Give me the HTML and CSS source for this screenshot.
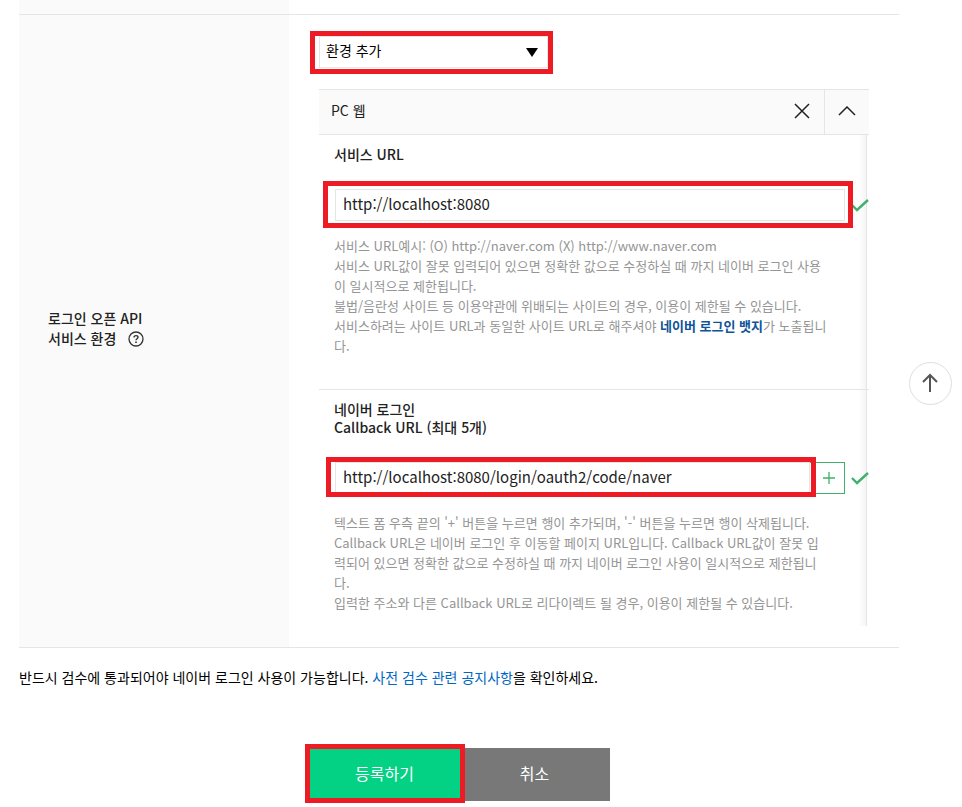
FILE: index.html
```html
<!DOCTYPE html>
<html lang="ko">
<head>
<meta charset="utf-8">
<meta name="viewport" content="width=device-width, initial-scale=1">
<title>애플리케이션 등록</title>
<link rel="stylesheet" href="styles.css">
</head>
<body>
<main class="page">
  <form class="register">
    <div class="row row-previous"><div class="row-head"></div></div>
    <section class="row">
      <div class="row-head">
        <h2 class="row-title">로그인 오픈 API<br>서비스 환경
          <button class="help" type="button" aria-label="도움말"><svg viewBox="0 0 16 16" width="16" height="16"><circle cx="8" cy="8" r="7" fill="none" stroke="currentColor" stroke-width="1.3"/><path d="M6 6.4C6 5.200 6.800 4.600 8 4.600s2 .7 2 1.700c0 1.300-2 1.500-2 3" fill="none" stroke="currentColor" stroke-width="1.4"/><path d="M7.200 10.400h1.600V12H7.200z" fill="currentColor"/></svg></button>
        </h2>
      </div>
      <div class="row-body">
        <div class="env marked">
          <select class="env-select" aria-label="환경 추가"><option>환경 추가</option></select>
          <svg class="env-arrow" viewBox="0 0 12 9" width="12" height="9"><path d="M0 0h12L6 9z"/></svg>
        </div>

        <div class="panel">
          <header class="panel-head">
            <h3 class="panel-title">PC 웹</h3>
            <button class="panel-button" type="button" aria-label="삭제"><svg viewBox="0 0 16 16" width="16" height="16"><path d="M1 1l14 14M15 1L1 15"/></svg></button>
            <button class="panel-button panel-fold" type="button" aria-label="접기"><svg viewBox="0 0 18 10" width="18" height="10"><path d="M1 9l8-8 8 8"/></svg></button>
          </header>
          <div class="panel-body">
            <div class="field">
              <label class="label" for="service-url">서비스 URL</label>
              <div class="control">
                <div class="input-wrap marked marked-service"><input class="input" id="service-url" type="text" value="http://localhost:8080"></div>
                <svg class="check" viewBox="0 0 18 13" width="18" height="13"><path d="M1 6l5 5L17 1"/></svg>
              </div>
              <p class="hint">서비스 URL예시: (O) http://naver.com (X) http://www.naver.com<br>서비스 URL값이 잘못 입력되어 있으면 정확한 값으로 수정하실 때 까지 네이버 로그인 사용<br>이 일시적으로 제한됩니다.<br>불법/음란성 사이트 등 이용약관에 위배되는 사이트의 경우, 이용이 제한될 수 있습니다.<br>서비스하려는 사이트 URL과 동일한 사이트 URL로 해주셔야 <a class="badge-link" href="#">네이버 로그인 뱃지</a>가 노출됩니<br>다.</p>
            </div>
            <div class="field field-callback">
              <label class="label" for="callback-url">네이버 로그인<br>Callback URL (최대 5개)</label>
              <div class="control">
                <div class="input-wrap marked marked-callback"><input class="input" id="callback-url" type="text" value="http://localhost:8080/login/oauth2/code/naver"></div>
                <button class="add" type="button" aria-label="추가"><svg viewBox="0 0 12 12" width="12" height="12"><path d="M6 0v12M0 6h12"/></svg></button>
                <svg class="check" viewBox="0 0 18 13" width="18" height="13"><path d="M1 6l5 5L17 1"/></svg>
              </div>
              <p class="hint">텍스트 폼 우측 끝의 '+' 버튼을 누르면 행이 추가되며, '-' 버튼을 누르면 행이 삭제됩니다.<br>Callback URL은 네이버 로그인 후 이동할 페이지 URL입니다. Callback URL값이 잘못 입<br>력되어 있으면 정확한 값으로 수정하실 때 까지 네이버 로그인 사용이 일시적으로 제한됩니<br>다.<br>입력한 주소와 다른 Callback URL로 리다이렉트 될 경우, 이용이 제한될 수 있습니다.</p>
            </div>
          </div>
        </div>
      </div>
    </section>
    <p class="notice">반드시 검수에 통과되어야 네이버 로그인 사용이 가능합니다. <a class="notice-link" href="#">사전 검수 관련 공지사항</a>을 확인하세요.</p>
    <div class="actions">
      <div class="marked marked-submit"><button class="action action-submit" type="submit">등록하기</button></div>
      <button class="action action-cancel" type="button">취소</button>
    </div>
  </form>
</main>
<a class="to-top" href="#" aria-label="맨 위로"><svg viewBox="0 0 18 20" width="18" height="20"><path d="M9 19V2M2 9l7-7 7 7"/></svg></a>
</body>
</html>
```
FILE: styles.css
```css
* { box-sizing: border-box; }

body {
  margin: 0;
  background: #fff;
  color: #000;
  font: 14px/20px "Noto Sans CJK KR", "Noto Sans", sans-serif;
}

h2, h3, p { margin: 0; font-size: 14px; font-weight: 400; }
button, input, select { font: inherit; }
button { padding: 0; border: 0; background: none; cursor: pointer; }
a { text-decoration: none; }
svg { display: block; flex: none; }

.page { padding: 0 61px 6px 19px; }

.row {
  display: flex;
  margin-right: 2px;
  border-bottom: 1px solid #e5e5e5;
}
.row-previous { height: 15px; }
.row-head {
  display: flex;
  align-items: center;
  flex: 0 0 270px;
  padding: 0 29px 6px;
  background: #fafafa;
}
.row-title { color: #222; font-weight: 500; }
.help {
  display: inline-block;
  margin: -2px 0 0 8px;
  vertical-align: middle;
  color: #333;
}
.row-body {
  flex: 1;
  min-width: 0;
  padding: 21px 30px;
}

/* Red frames that point out the controls to fill in */
.marked { position: relative; }
.marked::after {
  content: "";
  position: absolute;
  inset: -5px -5px -6px -9px;
  border: 5px solid #ed1c24;
  pointer-events: none;
}
.marked-service::after { inset: -8px -8px -7px -12px; }
.marked-callback::after { inset: -5px -6px -3px -9px; }
.marked-submit::after { inset: -4px 0 -2px -5px; }

.env { width: 229px; }
.env-select {
  display: block;
  width: 100%;
  height: 32px;
  padding: 0 30px 4px 6px;
  border: 1px solid #e5e5e5;
  border-radius: 0;
  background: #fff;
  color: #000;
  appearance: none;
}
.env-arrow {
  position: absolute;
  top: 12px;
  right: 10px;
  pointer-events: none;
}

.panel { margin-top: 21px; }
.panel-head {
  display: flex;
  height: 46px;
  border: solid #e5e5e5;
  border-width: 1px 0;
  background: #fafafa;
}
.panel-title {
  flex: 1;
  padding: 10px 12px;
  color: #222;
}
.panel-button {
  display: flex;
  align-items: center;
  justify-content: center;
  width: 45px;
  padding-bottom: 2px;
}
.panel-button path { fill: none; stroke: #222; stroke-width: 1.5; }
.panel-fold { border-left: 1px solid #e5e5e5; }
.panel-body {
  margin-right: 2px;
  border-right: 1px solid #e5e5e5;
  background: linear-gradient(to left, #f5f5f5, #fff 8px);
}

.field { padding: 9px 0 33px 15px; }
.field-callback {
  margin-right: -3px;
  padding: 10px 3px 13px 15px;
  border-top: 1px solid #e5e5e5;
}
.label {
  display: block;
  color: #222;
  font-weight: 500;
}
.field-callback .label { line-height: 18px; }
.control {
  display: flex;
  align-items: center;
  margin: 25px -3px 15px 1px;
}
.field-callback .control { margin: 26px -3px 19px 1px; }
.input-wrap { flex: 1; min-width: 0; }
.input {
  display: block;
  width: 100%;
  height: 32px;
  padding: 0 7px 4px;
  border: 1px solid #e5e5e5;
  border-radius: 0;
  background: #fff;
  color: #222;
  font-size: 15px;
}
.add {
  display: flex;
  align-items: center;
  justify-content: center;
  width: 35px;
  height: 32px;
  padding-left: 4px;
  border: 1px solid #41b06a;
  border-left: 0;
}
.add path { stroke: #41b06a; stroke-width: 1.3; }
.check { margin-left: 6px; }
.check path { fill: none; stroke: #41b06a; stroke-width: 2.4; }
.hint {
  color: #959595;
  font-size: 13px;
  white-space: nowrap;
}
.badge-link { color: #0f5499; font-weight: 700; }

.notice { margin-top: 19px; }
.notice-link { color: #0068c3; }

.actions {
  display: flex;
  justify-content: center;
  margin-top: 61px;
}
.action {
  display: block;
  height: 53px;
  padding: 0 6px 4px 0;
  color: #fff;
  font-size: 16px;
}
.action-submit { width: 155px; background: #03d183; }
.action-cancel { width: 145px; background: #787878; }

.to-top {
  position: fixed;
  top: 362px;
  right: 10px;
  display: flex;
  align-items: center;
  justify-content: center;
  width: 43px;
  height: 43px;
  padding: 0 2px 2px 0;
  border: 1px solid #ddd;
  border-radius: 50%;
  background: #fff;
}
.to-top path { fill: none; stroke: #555; stroke-width: 2; }
```
